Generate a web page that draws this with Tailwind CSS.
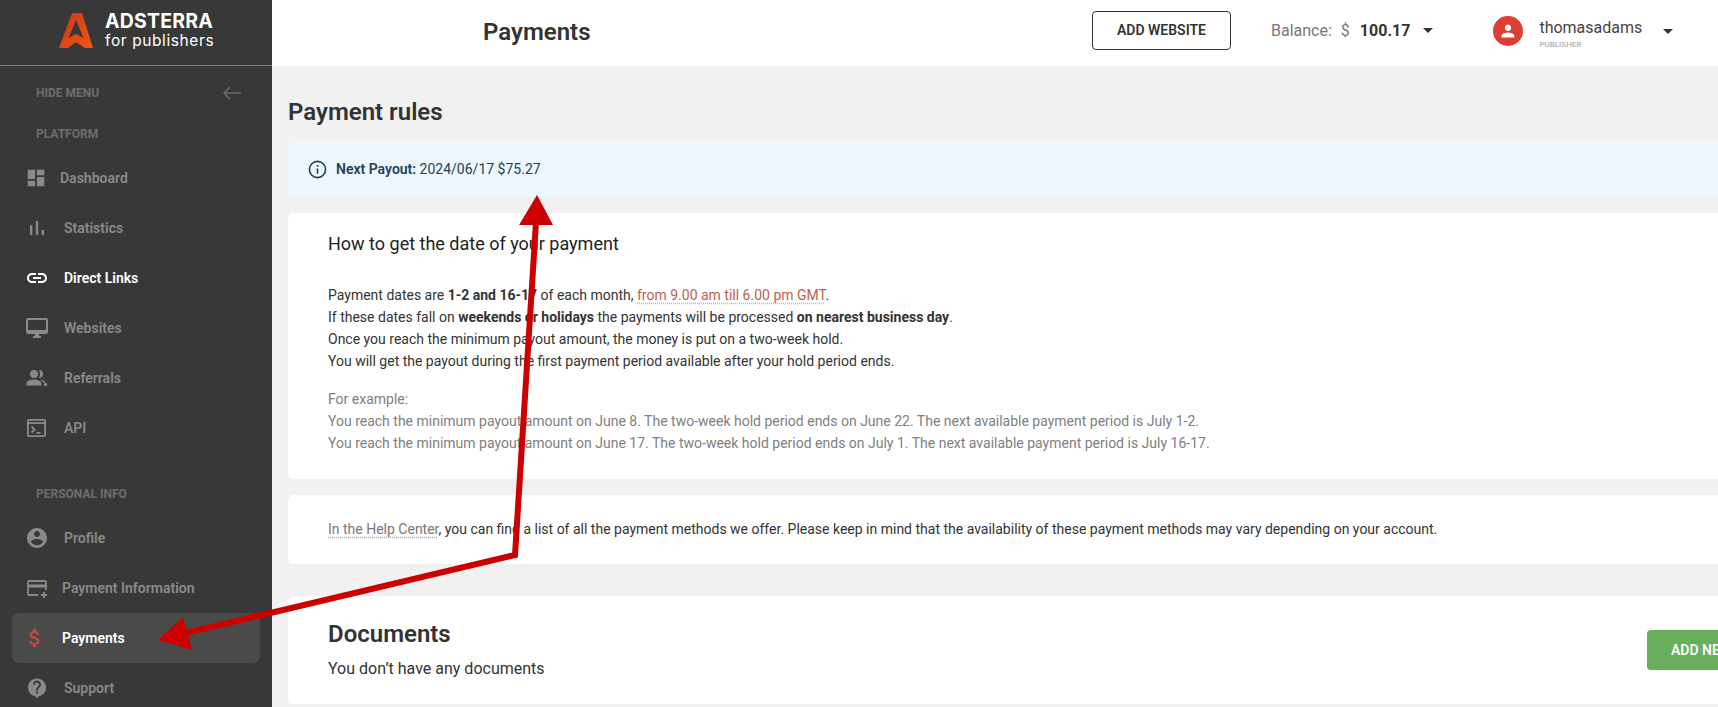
<!DOCTYPE html>
<html lang="en">
<head>
    <meta charset="UTF-8">
    <title>Payments</title>
    <script src="https://cdn.jsdelivr.net/npm/@tailwindcss/browser@4"></script>
</head>
<body class="font-[Roboto,sans-serif] bg-[#f1f1f1] h-screen overflow-hidden relative">
<div class="flex h-[707px] overflow-hidden">

    <!-- Sidebar -->
    <aside class="w-[272px] shrink-0 bg-[#383838] text-[#8a8a8a] text-[14px] font-semibold overflow-hidden">
        <div class="h-[66px] border-b border-[#7d7d7d] flex items-start pl-[59px] pt-[13px]">
            <svg class="w-[34px] h-[35px]" viewBox="0 0 34 35">
                <defs><linearGradient id="logo" x1="0" y1="0" x2="1" y2="1"><stop offset="0" stop-color="#c9351f"/><stop offset="1" stop-color="#f5560f"/></linearGradient></defs>
                <path fill="url(#logo)" fill-rule="evenodd" d="M13 0H23L34 35H26L17 29L9 35H0ZM17 7L9.5 25L17 21L24.500 25Z"/>
            </svg>
            <div class="ml-[12px] text-white">
                <div class="font-[Inter,sans-serif] text-[19.5px] font-bold leading-[18px] tracking-[0.2px] -mt-[1px]">ADSTERRA</div>
                <div class="font-[Inter,sans-serif] text-[15.5px] font-normal leading-[18px] tracking-[0.6px] mt-[2px]">for publishers</div>
            </div>
        </div>
        <div class="pt-[7px]">
            <div class="h-[40px] flex items-center justify-between pl-[36px] pr-[31px] text-[12px] font-bold text-[#6e6e6e]">
                <span>HIDE MENU</span>
                <svg class="w-[18px] h-[14px]" viewBox="0 0 18 14" fill="none" stroke="#6e6e6e" stroke-width="1.5"><path d="M18 7H1M7 1L1 7l6 6"/></svg>
            </div>
            <div class="h-[40px] flex items-center pl-[36px] pt-[2px] text-[12px] font-bold text-[#6e6e6e]">PLATFORM</div>
        </div>

        <a class="flex h-[50px] items-center pl-[25px] gap-[13px]">
            <svg class="w-[22px] h-[22px] fill-current" viewBox="0 0 24 24"><path d="M3 13h8V3H3v10zm0 8h8v-6H3v6zm10 0h8V11h-8v10zm0-18v6h8V3h-8z"/></svg>
            Dashboard
        </a>
        <a class="flex h-[50px] items-center pl-[25px] gap-[15px]">
            <svg class="w-[24px] h-[24px] fill-current" viewBox="0 0 24 24"><path d="M5 9.200h2.400V19H5zM10.800 5h2.400v14h-2.400zm5.800 9H19v5h-2.400z"/></svg>
            Statistics
        </a>
        <a class="flex h-[50px] items-center pl-[25px] gap-[15px] text-white">
            <svg class="w-[24px] h-[24px] fill-current" viewBox="0 0 24 24"><path d="M3.900 12c0-1.710 1.390-3.100 3.100-3.100h4V7H7c-2.760 0-5 2.240-5 5s2.240 5 5 5h4v-1.900H7c-1.710 0-3.100-1.390-3.100-3.100zM8 13h8v-2H8v2zm9-6h-4v1.900h4c1.710 0 3.100 1.390 3.100 3.100s-1.390 3.100-3.100 3.100h-4V17h4c2.760 0 5-2.240 5-5s-2.240-5-5-5z"/></svg>
            Direct Links
        </a>
        <a class="flex h-[50px] items-center pl-[25px] gap-[15px]">
            <svg class="w-[24px] h-[24px] fill-current" viewBox="0 0 24 24"><path d="M21 2H3c-1.100 0-2 .9-2 2v12c0 1.100.9 2 2 2h7v2H8v2h8v-2h-2v-2h7c1.100 0 2-.9 2-2V4c0-1.100-.9-2-2-2zm0 12H3V4h18v10z"/></svg>
            Websites
        </a>
        <a class="flex h-[50px] items-center pl-[25px] gap-[15px]">
            <svg class="w-[24px] h-[24px] fill-current" viewBox="0 0 24 24"><circle cx="9" cy="8" r="4"/><path d="M1.500 19.500v-2c0-2.800 4.500-4 7.500-4s7.500 1.200 7.500 4v2zM14 4a4 4 0 0 1 0 8c1.300-2.200 1.300-5.800 0-8zM15.500 13.500c2.500.3 4.500 1.200 4.800 3h-2.300c-.3-1.100-1.300-2.200-2.500-3z"/><circle cx="20.500" cy="18.500" r="1.800"/></svg>
            Referrals
        </a>
        <a class="flex h-[50px] items-center pl-[25px] gap-[15px]">
            <svg class="w-[24px] h-[24px]" viewBox="0 0 24 24" fill="none" stroke="currentColor" stroke-width="1.800"><rect x="2.900" y="3.900" width="17.200" height="16.200" rx="1.200"/><path d="M3 7.200h17M6.500 10.500l3 3-3 3M11.500 16.800h4"/></svg>
            API
        </a>

        <div class="h-[40px] mt-[20px] flex items-center pl-[36px] pt-[2px] text-[12px] font-bold text-[#6e6e6e]">PERSONAL INFO</div>

        <a class="flex h-[50px] items-center pl-[25px] gap-[15px]">
            <svg class="w-[24px] h-[24px] fill-current" viewBox="0 0 24 24"><path d="M12 2C6.480 2 2 6.480 2 12s4.480 10 10 10 10-4.480 10-10S17.520 2 12 2zm0 3c1.660 0 3 1.340 3 3s-1.340 3-3 3-3-1.340-3-3 1.340-3 3-3zm0 14.200c-2.500 0-4.710-1.280-6-3.220.03-1.990 4-3.080 6-3.080 1.990 0 5.970 1.090 6 3.080-1.290 1.940-3.500 3.220-6 3.220z"/></svg>
            Profile
        </a>
        <a class="flex h-[50px] items-center pl-[25px] gap-[13px]">
            <svg class="w-[24px] h-[24px]" viewBox="0 0 24 24" fill="none" stroke="currentColor" stroke-width="1.800"><path d="M13 19H4.200a1.200 1.200 0 0 1-1.200-1.200V6.200A1.200 1.200 0 0 1 4.200 5h15.600A1.200 1.200 0 0 1 21 6.200V14"/><path d="M3 10h18" stroke-width="3"/><path d="M19 16v6M16 19h6"/></svg>
            Payment Information
        </a>
        <a class="flex h-[50px] w-[248px] ml-[12px] rounded-md bg-[#4a4a4a] items-center pl-[11px] gap-[15px] text-white">
            <svg class="w-[24px] h-[24px] fill-[#cf4a33]" viewBox="0 0 24 24"><path d="M11.800 10.900c-2.270-.59-3-1.200-3-2.150 0-1.090 1.010-1.850 2.700-1.850 1.780 0 2.440.85 2.500 2.100h2.210c-.07-1.720-1.120-3.300-3.210-3.810V3h-3v2.160c-1.940.42-3.500 1.680-3.500 3.610 0 2.310 1.910 3.460 4.700 4.130 2.500.6 3 1.480 3 2.410 0 .69-.49 1.790-2.700 1.790-2.060 0-2.870-.92-2.980-2.100h-2.200c.12 2.190 1.760 3.420 3.680 3.830V21h3v-2.150c1.950-.37 3.500-1.500 3.500-3.550 0-2.840-2.430-3.810-4.700-4.400z"/></svg>
            Payments
        </a>
        <a class="flex h-[50px] items-center pl-[25px] gap-[15px]">
            <svg class="w-[24px] h-[24px] fill-current" viewBox="0 0 24 24"><path d="M12 2.500C6.900 2.500 3 6.400 3 11.500c0 4.600 3.400 8.200 7.800 8.900L12 23l1.200-2.600c4.400-.7 7.800-4.300 7.800-8.900 0-5.100-3.900-9-9-9zm1 15h-2v-2h2v2zm2.070-6.750l-.9.92C13.450 12.400 13 13 13 14.500h-2V14c0-1.100.45-2.100 1.170-2.830l1.240-1.260c.37-.36.59-.86.59-1.410 0-1.100-.9-2-2-2s-2 .9-2 2H8c0-2.210 1.790-4 4-4s4 1.790 4 4c0 .88-.36 1.680-.93 2.250z"/></svg>
            Support
        </a>
    </aside>

    <!-- Main column -->
    <div class="flex-1 min-w-0 overflow-hidden text-[#333]">
        <header class="h-[66px] bg-white flex items-center">
            <h1 class="ml-[211px] w-[607px] shrink-0 text-[24px] leading-[30px] font-semibold text-[#333] -mt-[2px]">Payments</h1>
            <button class="ml-[2px] w-[139px] h-[39px] border border-[#333] rounded-[4px] text-[14px] font-semibold -mt-[5px]">ADD WEBSITE</button>
            <div class="ml-[40px] flex items-center text-[16px] text-[#777] -mt-[5px]">
                <span>Balance:</span>
                <span class="ml-[9px]">$</span>
                <span class="ml-[10px] font-bold text-[#333]">100.17</span>
                <span class="ml-[13px] w-0 h-0 border-x-[5px] border-x-transparent border-t-[5px] border-t-[#333]"></span>
            </div>
            <span class="ml-[60px] w-[30px] h-[30px] rounded-full bg-[#dc3f2f] flex items-center justify-center -mt-[4px]">
                <svg class="w-[24px] h-[24px] fill-white" viewBox="0 0 24 24"><path d="M12 12c2.210 0 4-1.790 4-4s-1.790-4-4-4-4 1.790-4 4 1.790 4 4 4zm0 2c-2.670 0-8 1.340-8 4v2h16v-2c0-2.660-5.330-4-8-4z" transform="translate(2.400 2.400) scale(.8)"/></svg>
            </span>
            <div class="ml-[16px] w-[124px] mt-[1px]">
                <div class="text-[16px] leading-[20px] text-[#444]">thomasadams</div>
                <div class="text-[8px] leading-[10px] mt-[2px] font-medium text-[#b0b0b0]">PUBLISHER</div>
            </div>
            <span class="w-0 h-0 border-x-[5px] border-x-transparent border-t-[5px] border-t-[#333] -mt-[4px]"></span>
        </header>

        <main class="pl-4 w-[1576px]">
            <h2 class="h-[76px] pt-[31px] text-[24px] leading-[30px] font-semibold text-[#333]">Payment rules</h2>

            <div class="h-[55px] bg-[#edf6fd] flex items-center pl-[20px] text-[14px] text-[#1d4256] rounded-sm">
                <svg class="w-[19px] h-[19px]" viewBox="0 0 20 20" fill="none" stroke="#1d4256" stroke-width="1.700"><circle cx="10" cy="10" r="8.500"/><path d="M10 9v5.500M10 5.300v1.900"/></svg>
                <span class="ml-[9px]"><b class="font-semibold">Next Payout:</b> 2024/06/17 $75.27</span>
            </div>

            <section class="mt-4 h-[266px] bg-white rounded-md pl-[40px] pt-[19px] text-[14px] leading-[22px]">
                <h3 class="text-[18px] leading-[24px] text-[#222] mb-[28px]">How to get the date of your payment</h3>
                <p>Payment dates are <b class="font-bold">1-2 and 16-17</b> of each month, <span class="text-[#c0604f] underline decoration-dotted decoration-[#d8a8a0] underline-offset-[3px]">from 9.00 am till 6.00 pm GMT</span>.</p>
                <p>If these dates fall on <b class="font-bold">weekends or holidays</b> the payments will be processed <b class="font-bold">on nearest business day</b>.</p>
                <p>Once you reach the minimum payout amount, the money is put on a two-week hold.</p>
                <p>You will get the payout during the first payment period available after your hold period ends.</p>
                <div class="mt-4 text-[#808080]">
                    <p>For example:</p>
                    <p>You reach the minimum payout amount on June 8. The two-week hold period ends on June 22. The next available payment period is July 1-2.</p>
                    <p>You reach the minimum payout amount on June 17. The two-week hold period ends on July 1. The next available payment period is July 16-17.</p>
                </div>
            </section>

            <section class="mt-4 h-[69px] bg-white rounded-md pl-[40px] pt-[23px] text-[14px] leading-[22px]">
                <p><span class="text-[#777] underline decoration-dotted decoration-[#aaa] underline-offset-[3px]">In the Help Center</span>, you can find a list of all the payment methods we offer. Please keep in mind that the availability of these payment methods may vary depending on your account.</p>
            </section>

            <section class="mt-8 h-[108px] bg-white rounded-md pl-[40px] pr-[40px] flex items-center justify-between">
                <div class="pb-[2px]">
                    <h2 class="text-[24px] leading-[30px] font-semibold text-[#333]">Documents</h2>
                    <p class="mt-[9px] text-[16px] leading-[22px]">You don’t have any documents</p>
                </div>
                <button class="w-[161px] h-[40px] bg-[#68ae5c] rounded-[4px] text-white text-[14px] font-semibold text-left pl-[24px]">ADD NEW</button>
            </section>
        </main>
    </div>
</div>

<!-- Annotation arrows -->
<svg class="absolute inset-0 w-[1718px] h-[707px] pointer-events-none" viewBox="0 0 1718 707">
    <path d="M536 222L515 555L186 633" fill="none" stroke="#cc0000" stroke-width="6"/>
    <path d="M537 195L519 225H553Z" fill="#cc0000"/>
    <path d="M158 640L183 617L192 650Z" fill="#cc0000"/>
</svg>
</body>
</html>
